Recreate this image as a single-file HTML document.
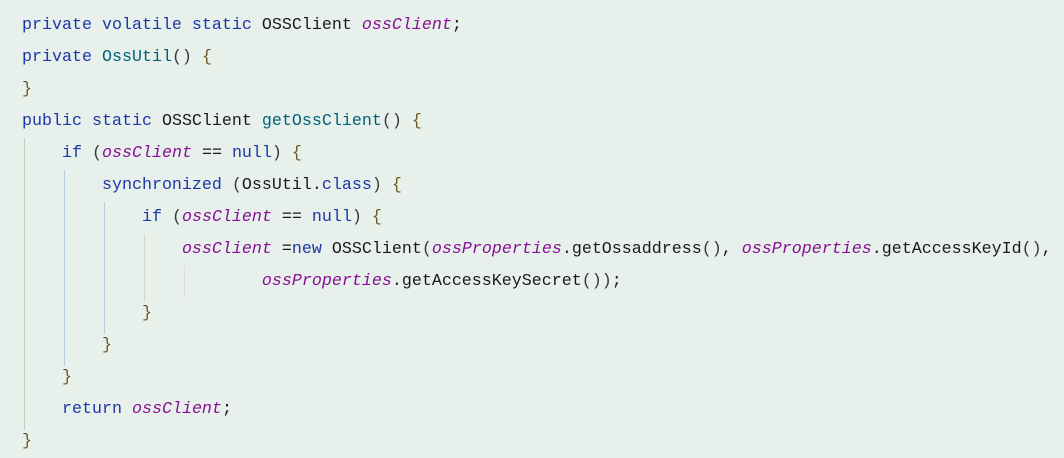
<!DOCTYPE html>
<html><head><meta charset="utf-8"><style>
html,body{margin:0;padding:0;}
body{width:1064px;height:455px;background:#e7f0ea;position:relative;overflow:hidden;
font-family:"Liberation Mono",monospace;font-size:16.67px;color:#1a1a1a;}
.l{position:absolute;left:22px;height:32px;line-height:32px;white-space:pre;}
.k{color:#1d36a8}
.m{color:#00627a}
.f{color:#871094;font-style:italic}
.b{color:#6b5a1e}
.p{color:#3a3a3a}
.g{position:absolute;width:1px;}
</style></head><body>
<div class="g" style="left:24px;top:138px;height:292px;background:#bcd3c4"></div>
<div class="g" style="left:64px;top:170px;height:196px;background:#b8cde0"></div>
<div class="g" style="left:104px;top:202px;height:132px;background:#b8cde0"></div>
<div class="g" style="left:144px;top:234px;height:68px;background:#d6d6cc"></div>
<div class="g" style="left:184px;top:266px;height:32px;background:#e6dbd8"></div>

<div class="l" style="top:10px"><span class="k">private volatile static</span> OSSClient <span class="f">ossClient</span>;</div>
<div class="l" style="top:42px"><span class="k">private</span> <span class="m">OssUtil</span><span class="p">()</span> <span class="b">{</span></div>
<div class="l" style="top:74px"><span class="b">}</span></div>
<div class="l" style="top:106px"><span class="k">public static</span> OSSClient <span class="m">getOssClient</span><span class="p">()</span> <span class="b">{</span></div>
<div class="l" style="top:138px">    <span class="k">if</span> <span class="p">(</span><span class="f">ossClient</span> == <span class="k">null</span><span class="p">)</span> <span class="b">{</span></div>
<div class="l" style="top:170px">        <span class="k">synchronized</span> <span class="p">(</span>OssUtil.<span class="k">class</span><span class="p">)</span> <span class="b">{</span></div>
<div class="l" style="top:202px">            <span class="k">if</span> <span class="p">(</span><span class="f">ossClient</span> == <span class="k">null</span><span class="p">)</span> <span class="b">{</span></div>
<div class="l" style="top:234px">                <span class="f">ossClient</span> =<span class="k">new</span> OSSClient<span class="p">(</span><span class="f">ossProperties</span>.getOssaddress<span class="p">()</span>, <span class="f">ossProperties</span>.getAccessKeyId<span class="p">()</span>,</div>
<div class="l" style="top:266px">                        <span class="f">ossProperties</span>.getAccessKeySecret<span class="p">())</span>;</div>
<div class="l" style="top:298px">            <span class="b">}</span></div>
<div class="l" style="top:330px">        <span class="b">}</span></div>
<div class="l" style="top:362px">    <span class="b">}</span></div>
<div class="l" style="top:394px">    <span class="k">return</span> <span class="f">ossClient</span>;</div>
<div class="l" style="top:426px"><span class="b">}</span></div>
</body></html>
